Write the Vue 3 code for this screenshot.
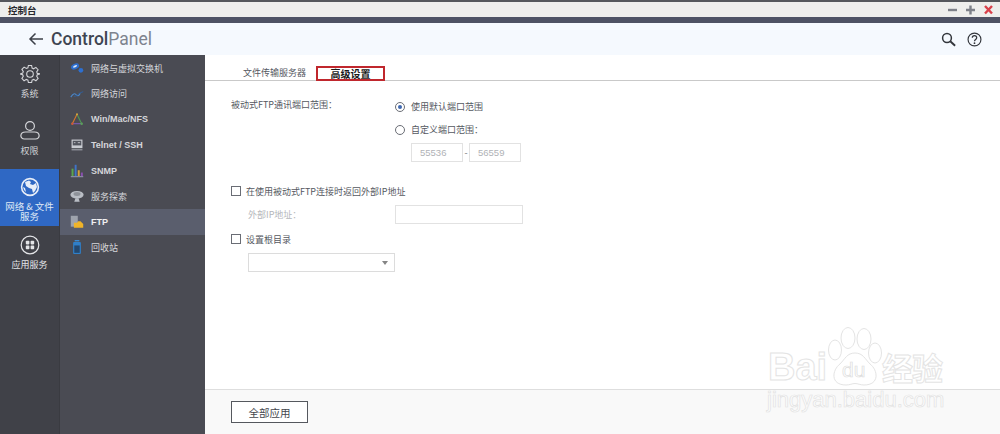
<script setup>
const rail = [
  { key: 'gear', label: '系统' },
  { key: 'user', label: '权限' },
  { key: 'globe', label: '网络 & 文件服务', active: true },
  { key: 'apps', label: '应用服务' },
]
const menu = [
  { key: 'net', label: '网络与虚拟交换机' },
  { key: 'access', label: '网络访问' },
  { key: 'win', label: 'Win/Mac/NFS' },
  { key: 'tel', label: 'Telnet / SSH' },
  { key: 'snmp', label: 'SNMP' },
  { key: 'disc', label: '服务探索' },
  { key: 'ftp', label: 'FTP', active: true },
  { key: 'bin', label: '回收站' },
]
</script>

<template>
  <div class="app">
    <div class="titlebar">
      <span class="title">控制台</span>
      <div class="winctl">
        <svg width="52" height="15" viewBox="0 0 52 15">
          <path d="M2 8h9" stroke="#7d8088" stroke-width="2.4" />
          <path d="M20 8h9M24.500 3.500v9" stroke="#7d8088" stroke-width="2.400" />
          <path d="M39 4l7 7.500M46 4l-7 7.500" stroke="#d8404a" stroke-width="2.400" />
        </svg>
      </div>
    </div>
    <div class="band"></div>
    <header class="header">
      <svg class="back" width="16" height="14" viewBox="0 0 16 14">
        <path d="M15 7H2M7.500 1.500L2 7l5.500 5.500" fill="none" stroke="#3c4048" stroke-width="1.500" />
      </svg>
      <span class="brand"><b>Control</b>Panel</span>
      <div class="tools">
        <svg width="15" height="15" viewBox="0 0 17 17">
          <circle cx="6.800" cy="6.800" r="5" fill="none" stroke="#33363c" stroke-width="1.700" />
          <path d="M10.500 10.500L16 15.500" stroke="#33363c" stroke-width="2.200" />
        </svg>
        <svg width="15" height="15" viewBox="0 0 17 17">
          <circle cx="8.500" cy="8.500" r="7.300" fill="none" stroke="#33363c" stroke-width="1.300" />
          <path d="M6 6.600c0-3.200 5-3.200 5 0 0 2-2.500 1.900-2.500 3.900" fill="none" stroke="#33363c" stroke-width="1.400" />
          <circle cx="8.500" cy="12.700" r="1" fill="#33363c" />
        </svg>
      </div>
    </header>

    <div class="body">
      <nav class="rail">
        <div v-for="r in rail" :key="r.key" class="rail-item" :class="[r.key, { active: r.active }]">
          <svg v-if="r.key === 'gear'" width="20" height="20" viewBox="0 0 20 20" fill="none" stroke="#d4d5d9" stroke-width="1.100">
            <circle cx="10" cy="10" r="3.300" />
            <path d="M8.400 1.500h3.200l.5 2.600 1.500.7 2.300-1.400 2.200 2.300-1.400 2.200.6 1.500 2.600.5v0l-2.600.9-.6 1.500 1.400 2.200-2.200 2.300-2.300-1.400-1.500.7-.5 2.400H8.400l-.5-2.400-1.500-.7-2.300 1.400-2.200-2.300 1.400-2.200-.6-1.500L.1 10l2.600-.9.6-1.500-1.400-2.200 2.200-2.300 2.300 1.400 1.500-.7z" />
          </svg>
          <svg v-else-if="r.key === 'user'" width="20" height="20" viewBox="0 0 20 20" fill="none" stroke="#d4d5d9" stroke-width="1.200">
            <circle cx="10" cy="6" r="4.400" />
            <path d="M5.500 12h9c6 0 6 7 1 7H4.500c-5 0-5-7 1-7z" />
          </svg>
          <svg v-else-if="r.key === 'globe'" width="20" height="20" viewBox="0 0 20 20">
            <circle cx="10" cy="10" r="8.400" fill="#2f68c4" stroke="#e8eef8" stroke-width="1.600" />
            <path d="M5 5l4-1.500 2 1.500-1 2 3 1 3-2 1 4-2 4-2 2-1-4-3-1-3-2zM3 10l2 1 1 4-2-2z" fill="#e8eef8" />
          </svg>
          <svg v-else width="20" height="20" viewBox="0 0 20 20">
            <circle cx="10" cy="10" r="8.800" fill="none" stroke="#e4e5e8" stroke-width="1.200" />
            <rect x="5.800" y="5.800" width="3.600" height="3.600" rx="0.800" fill="#e4e5e8" />
            <rect x="10.600" y="5.800" width="3.600" height="3.600" rx="0.800" fill="#e4e5e8" />
            <rect x="5.800" y="10.600" width="3.600" height="3.600" rx="0.800" fill="#e4e5e8" />
            <rect x="10.600" y="10.600" width="3.600" height="3.600" rx="0.800" fill="#e4e5e8" />
          </svg>
          <span class="rail-label">{{ r.label }}</span>
        </div>
      </nav>

      <aside class="menu">
        <div v-for="m in menu" :key="m.key" class="menu-item" :class="{ active: m.active }">
          <svg class="mi" width="14" height="14" viewBox="0 0 18 18">
            <template v-if="m.key === 'net'">
              <ellipse cx="6.500" cy="7" rx="5.500" ry="3.500" fill="#2d6fd0" transform="rotate(-25 6.500 7)" />
              <ellipse cx="6.500" cy="7" rx="2.800" ry="1.200" fill="#dbe7f8" transform="rotate(-25 6.500 7)" />
              <circle cx="14" cy="12" r="3" fill="#2d6fd0" />
            </template>
            <template v-else-if="m.key === 'access'">
              <path d="M1 13c3-5 5-5 7-3s4 1 5-2" fill="none" stroke="#4a86c8" stroke-width="1.400" />
              <path d="M5 12c3 0 4-1 6-3s4-2 6-3" fill="none" stroke="#2f5f9c" stroke-width="1.200" />
            </template>
            <template v-else-if="m.key === 'win'">
              <path d="M9 3L3 15" stroke="#d97a2b" stroke-width="1.400" />
              <path d="M9 3l6 12" stroke="#4f9a55" stroke-width="1.400" />
              <path d="M3 15h12" stroke="#7c5bb5" stroke-width="1.400" />
              <circle cx="3" cy="15" r="1.600" fill="#cf5a36" />
              <circle cx="15" cy="15" r="1.600" fill="#5aa05a" />
              <circle cx="9" cy="3" r="1.300" fill="#d9a33a" />
            </template>
            <template v-else-if="m.key === 'tel'">
              <rect x="2" y="2" width="14" height="11" fill="#c9ccd2" />
              <rect x="3.500" y="3.500" width="11" height="6" fill="#53565f" />
              <path d="M5 6h2M10 6h3" stroke="#d8dadf" />
              <rect x="2" y="14" width="14" height="2" fill="#8b8e96" />
            </template>
            <template v-else-if="m.key === 'snmp'">
              <rect x="1" y="15.500" width="16" height="1.500" fill="#8f8fa8" />
              <rect x="2" y="6" width="2.500" height="9.500" fill="#5aa64e" />
              <rect x="6" y="1" width="2.500" height="14.500" fill="#3f74c6" />
              <rect x="10" y="8" width="2.500" height="7.500" fill="#d8a13a" />
              <rect x="14" y="11" width="2.500" height="4.500" fill="#8a4fb0" />
            </template>
            <template v-else-if="m.key === 'disc'">
              <ellipse cx="9" cy="7.500" rx="8.500" ry="5" fill="#b9bdc4" />
              <ellipse cx="9" cy="6.500" rx="4.500" ry="2.500" fill="#8e9299" />
              <path d="M7 12h4l1.500 4.500h-7z" fill="#b9bdc4" />
            </template>
            <template v-else-if="m.key === 'ftp'">
              <rect x="1" y="1" width="9" height="14" fill="#9ea3ad" />
              <path d="M5 10h4l1.500-2h3l3.500 3.500V16.500H5z" fill="#f0b429" />
            </template>
            <template v-else>
              <rect x="4" y="2.500" width="10" height="15.500" rx="1.200" fill="#2f7fc8" />
              <rect x="5.500" y="7" width="7" height="9.500" fill="#24486f" />
              <rect x="6" y="0" width="6" height="1.800" fill="#3a8ad2" />
            </template>
          </svg>
          <span>{{ m.label }}</span>
        </div>
      </aside>

      <main class="content">
        <div class="scroll">
          <div class="tabs">
            <span class="tab">文件传输服务器</span>
            <span class="tab current">高级设置</span>
          </div>

          <section class="ports">
            <div class="ports-label">被动式FTP通讯端口范围：</div>
            <div class="ports-opts">
              <label class="opt"><i class="radio on"></i>使用默认端口范围</label>
              <label class="opt"><i class="radio"></i>自定义端口范围：</label>
              <div class="range">
                <span class="box sm">55536</span>
                <span class="dash">-</span>
                <span class="box sm">56559</span>
              </div>
            </div>
          </section>

          <label class="check first"><i class="cb"></i>在使用被动式FTP连接时返回外部IP地址</label>
          <div class="ext">
            <span class="ext-label">外部IP地址：</span>
            <span class="box wide"></span>
          </div>
          <label class="check second"><i class="cb"></i>设置根目录</label>
          <div class="select"><i class="caret"></i></div>
        </div>

        <footer class="footer">
          <button class="apply">全部应用</button>
        </footer>
      </main>
    </div>

    <div class="wm" aria-hidden="true">
      <svg class="paw" width="130" height="62" viewBox="0 0 130 62" fill="#fff" stroke="#e4e4e4" stroke-width="1">
        <ellipse cx="80" cy="11" rx="7" ry="10.500" />
        <ellipse cx="96" cy="12" rx="7" ry="10.500" />
        <ellipse cx="67" cy="23" rx="6.500" ry="10" />
        <ellipse cx="107" cy="26" rx="6.500" ry="10" />
        <path d="M87 26c8 0 10 6 15 11 8 6 10 21-6 21-4 0-6-1.500-9-1.500s-5 1.500-9 1.500c-16 0-14-15-6-21 5-5 7-11 15-11z" />
      </svg>
      <span class="wm-bai">Bai</span>
      <span class="wm-du">du</span>
      <span class="wm-cn">经验</span>
      <span class="wm-url">jingyan.baidu.com</span>
    </div>
  </div>
</template>

<style>
html, body { margin: 0; background: #fff; }
</style>

<style scoped>
.app {
  position: relative;
  width: 1000px;
  height: 434px;
  overflow: hidden;
  display: flex;
  flex-direction: column;
  font-family: "Noto Sans CJK SC", "Liberation Sans", sans-serif;
  font-size: 9px;
  color: #55585f;
  background: #fff;
}
.titlebar {
  height: 15px;
  border-top: 2px solid #55575c;
  background: #eeeeec;
  display: flex;
  align-items: center;
  justify-content: space-between;
}
.title { margin-left: 8px; font-size: 9.500px; font-weight: 700; color: #26282c; }
.winctl { display: flex; margin-right: 2px; }
.band { height: 6px; background: #4e5264; }
.header {
  height: 32px;
  background: #f5f9fe;
  display: flex;
  align-items: center;
  color: #3c4250;
}
.back { margin-left: 28px; }
.brand {
  margin-left: 7px;
  font-family: Roboto, "Liberation Sans", sans-serif;
  font-size: 17.500px;
  color: #7d838e;
}
.brand b { font-weight: 500; color: #3e4552; }
.tools { margin-left: auto; margin-right: 18px; display: flex; gap: 11px; }
.body { flex: 1; display: flex; min-height: 0; }
.rail {
  width: 59px;
  background: #404148;
  border-right: 1px solid #3a3b41;
  display: flex;
  flex-direction: column;
}
.rail-item {
  height: 57px;
  display: flex;
  flex-direction: column;
  align-items: center;
  color: #d4d5d9;
  padding-top: 8px;
  box-sizing: border-box;
}
.rail-label { margin-top: 5px; line-height: 11px; font-size: 9px; text-align: center; }
.rail-item.gear { padding-top: 9px; }
.rail-item.gear .rail-label { margin-top: 4px; }
.rail-item.active {
  background: #2f68c4;
  color: #dfe8f6;
  padding-top: 8px;
}
.rail-item.active .rail-label { width: 50px; margin-top: 5px; line-height: 9.500px; font-size: 9.500px; }
.rail-item.apps { padding-top: 9px; color: #e4e5e8; }
.rail-item.apps .rail-label { margin-top: 4px; }
.menu {
  width: 145px;
  background: #4a4b53;
  box-sizing: border-box;
  padding-top: 0.500px;
}
.menu-item {
  height: 25.600px;
  display: flex;
  align-items: center;
  padding-left: 10px;
  color: #d5d6da;
  font-size: 9px;
  font-family: "Liberation Sans", "Noto Sans CJK SC", sans-serif;
}
.menu-item span { margin-left: 7px; font-weight: 400; }
.menu-item:nth-child(n+3):not(:nth-child(6)):not(:nth-child(8)) span { font-weight: 700; }
.menu-item.active { background: #5a5e6d; color: #f0f0f2; }
.mi { flex: none; }
.content { flex: 1; display: flex; flex-direction: column; min-width: 0; background: #fff; }
.scroll { flex: 1; min-height: 0; }
.tabs {
  height: 26px;
  border-bottom: 1px solid #c9c9c9;
  box-sizing: border-box;
  display: flex;
  align-items: flex-end;
  margin-bottom: 14px;
}
.tab { font-size: 9px; line-height: 14px; color: #55585f; }
.tabs .tab:first-child { margin-left: 38px; }
.tab.current {
  margin-left: 10px;
  width: 69px;
  height: 15px;
  box-sizing: border-box;
  border: 2px solid #c0272d;
  font-size: 10px;
  font-weight: 700;
  color: #1a1a1a;
  text-align: center;
  line-height: 12px;
  background: #fff;
  margin-bottom: -1px;
}
.ports { display: flex; margin-left: 26px; height: 70px; }
.ports-label { width: 164px; line-height: 20px; }
.ports-opts { display: flex; flex-direction: column; }
.opt { display: flex; align-items: center; height: 23px; line-height: 20px; }
.radio {
  width: 8px;
  height: 8px;
  border: 1px solid #6a6d75;
  border-radius: 50%;
  margin-right: 6px;
  box-sizing: content-box;
  position: relative;
  display: block;
}
.radio.on::after {
  content: "";
  position: absolute;
  left: 2px;
  top: 2px;
  width: 4px;
  height: 4px;
  border-radius: 50%;
  background: #3f68b0;
}
.range { display: flex; align-items: center; margin-left: 16px; margin-top: 2px; }
.box {
  display: flex;
  align-items: center;
  box-sizing: border-box;
  border: 1px solid #e2e2e2;
  height: 19px;
  background: #fff;
  color: #b0b2b6;
}
.sm { width: 52px; padding-left: 8px; font-size: 9.500px; font-family: "Liberation Sans", sans-serif; }
.dash { width: 6px; text-align: center; color: #777; }
.check { display: flex; align-items: center; margin-left: 26px; height: 16px; }
.first { margin-top: 18px; }
.second { margin-top: 7px; }
.cb {
  width: 8px;
  height: 8px;
  box-sizing: content-box;
  border: 1px solid #6a6d75;
  margin-right: 5px;
  display: block;
}
.ext { display: flex; align-items: center; margin-left: 43px; margin-top: 6px; height: 19px; }
.ext-label { width: 147px; color: #b4b6ba; }
.wide { width: 128px; }
.select {
  margin-left: 43px;
  margin-top: 6px;
  width: 147px;
  height: 19px;
  box-sizing: border-box;
  border: 1px solid #dcdcdc;
  position: relative;
}
.caret {
  position: absolute;
  right: 6px;
  top: 7px;
  border-left: 3px solid transparent;
  border-right: 3px solid transparent;
  border-top: 4px solid #858585;
}
.footer {
  height: 45px;
  box-sizing: border-box;
  border-top: 1px solid #dedede;
  background: #f9f9f9;
  padding: 11px 0 0 26px;
}
.apply {
  display: block;
  width: 77px;
  height: 22px;
  box-sizing: border-box;
  padding: 0;
  border: 1px solid #55585e;
  background: #fff;
  font: inherit;
  font-size: 10.500px;
  color: #44474d;
}
.wm { position: absolute; left: 768px; top: 327px; width: 220px; height: 100px; pointer-events: none; }
.paw { position: absolute; left: 0; top: 0; }
.wm-bai, .wm-du, .wm-cn, .wm-url {
  position: absolute;
  color: #fff;
  -webkit-text-stroke: 1px #e4e4e4;
  font-family: "Liberation Sans", "Noto Sans CJK SC", sans-serif;
  font-weight: 700;
  line-height: 1;
}
.wm-bai { left: 0; top: 21px; font-size: 38px; letter-spacing: 0; }
.wm-du { left: 74px; top: 32px; font-size: 21px; font-weight: 400; -webkit-text-stroke: 0.700px #dcdcdc; }
.wm-cn { left: 114px; top: 24px; font-size: 31px; font-family: "Noto Sans CJK SC", sans-serif; letter-spacing: -1px; }
.wm-url { left: -1px; top: 62px; font-size: 22px; font-weight: 400; -webkit-text-stroke: 0.700px #e2e2e2; }
</style>
